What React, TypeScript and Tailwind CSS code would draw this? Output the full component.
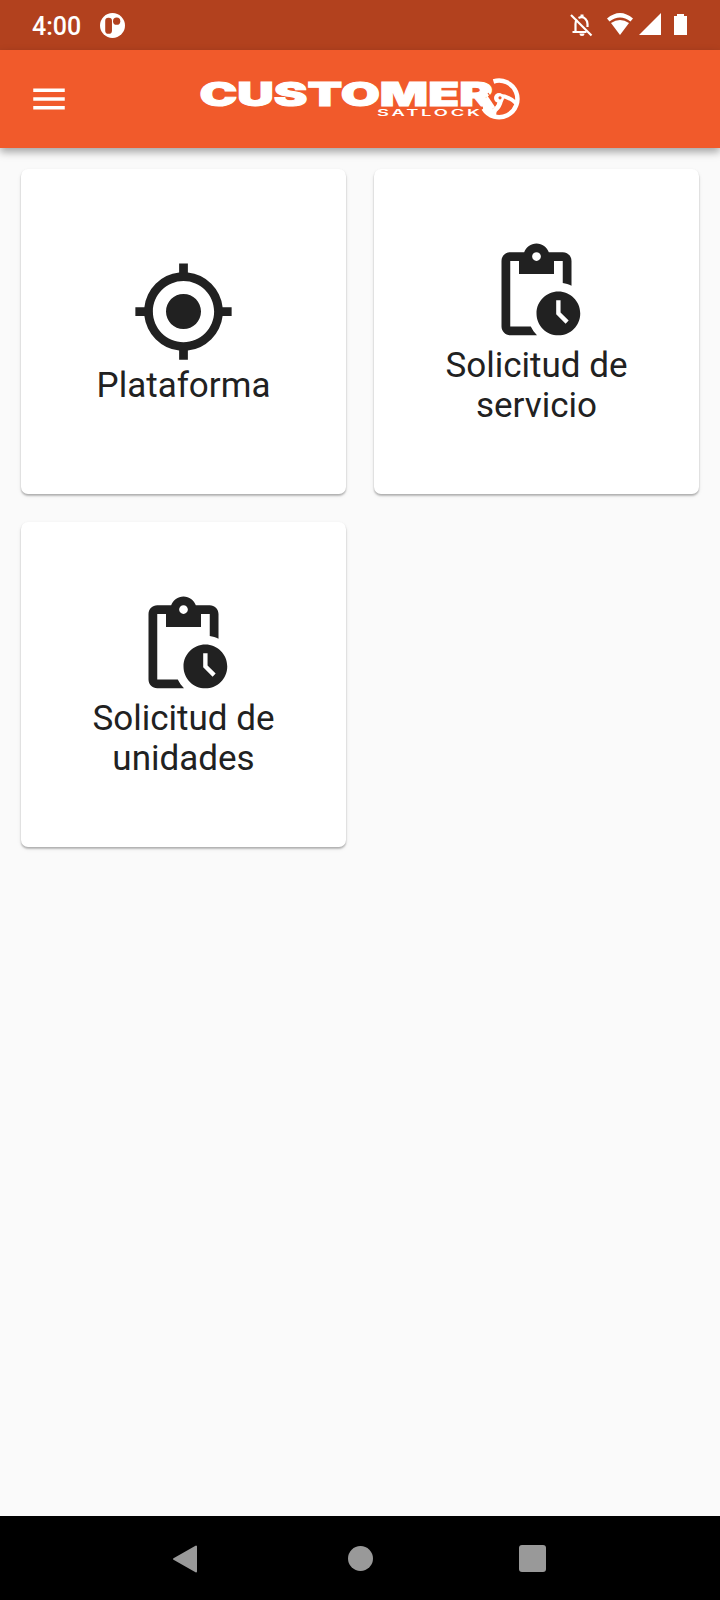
import type { ReactNode } from "react";
import { MdMenu, MdMyLocation, MdPendingActions } from "react-icons/md";

interface MenuCardProps {
  icon: ReactNode;
  lines: string[];
}

function MenuCard({ icon, lines }: MenuCardProps) {
  return (
    <button className="flex h-[325px] flex-col items-center justify-center rounded-[7px] bg-white text-[#212121] shadow-[0_2px_2px_rgba(0,0,0,0.2),0_1px_2px_rgba(0,0,0,0.1),0_2px_5px_rgba(0,0,0,0.06)]">
      {icon}
      {lines.map((line) => (
        <span key={line} className="h-10 text-[35px] leading-[44px] whitespace-nowrap">
          {line}
        </span>
      ))}
    </button>
  );
}

function StatusBar() {
  return (
    <div className="flex h-[50px] items-center bg-[#b2411e] pr-8 pl-8 text-white">
      <span className="text-[25px] leading-[50px] font-medium pt-[3px]">4:00</span>
      <svg className="ml-[19px] size-[25px]" viewBox="0 0 24 24">
        <circle cx="12" cy="12" r="12" fill="#fff" />
        <rect x="5" y="4.500" width="6.500" height="15.500" rx="3" fill="#b2411e" />
        <circle cx="16" cy="7.800" r="3.500" fill="#b2411e" />
      </svg>
      <svg className="ml-auto h-6 w-[118px]" viewBox="570 13 118 24" fill="#fff">
        <g fill="none" stroke="#fff" strokeWidth="2.200">
          <path d="M571 15l20.500 20.500" />
          <path d="M572.500 32h14M575.500 32v-8q0-3 1.500-4.500M578.500 18q4-2 7 1 2 2 2 5v3" />
        </g>
        <path d="M580.500 14.500h3v3h-3zM579.500 33.500h5q0 2.500-2.500 2.500t-2.500-2.500z" />
        <path d="M607 18.500q13-11 26 0l-2.500 3q-10.500-8-21 0z" />
        <path d="M611 23q9-6 18 0l-9 12z" />
        <path d="M661 13v22h-22z" />
        <path d="M674 16h3v-2h7v2h3v19h-13z" />
      </svg>
    </div>
  );
}

function Logo() {
  return (
    <svg className="h-[50px] w-[322px]" viewBox="199 74 322 50">
      <text
        transform="translate(199.500 105.700) scale(1.600 1)"
        textLength="183.500"
        lengthAdjust="spacingAndGlyphs"
        fontFamily="Inter, sans-serif"
        fontWeight="900"
        fontSize="32.500"
        fill="#fff"
        stroke="#fff"
        strokeWidth="1.300"
        vectorEffect="non-scaling-stroke"
      >
        CUSTOMER
      </text>
      <text
        transform="translate(377 116) scale(2 1)"
        textLength="51.500"
        fontFamily="Inter, sans-serif"
        fontWeight="600"
        fontSize="9.200"
        fill="#fff"
      >
        SATLOCK
      </text>
      {/* steering wheel */}
      <path d="M487 95l8 12-4 3-7-5z" fill="#fff" />
      <g fill="none" stroke="#fff">
        <path d="M493.500 81.500A18.300 18.300 0 1 1 483.500 108.500" strokeWidth="4.500" />
        <path d="M483 108q7-1 9 7" strokeWidth="6" />
        <path d="M500 96q9 0 17 8" strokeWidth="4" />
        <path d="M501 99q-2 8-5 10t-2 8" strokeWidth="5" />
      </g>
      <path d="M488 93l8 12" stroke="#f15a2b" strokeWidth="1.200" />
      <circle cx="499" cy="98" r="5" fill="#fff" />
      <circle cx="500" cy="97.800" r="1.600" fill="#f15a2b" />
    </svg>
  );
}

function AppBar() {
  return (
    <header className="z-10 flex h-[98px] items-center bg-[#f15a2b] pl-7 text-white shadow-[0_4px_8px_rgba(0,0,0,0.35)]">
      <MdMenu size={42} />
      <div className="ml-[129px] flex">
        <Logo />
      </div>
    </header>
  );
}

function NavigationBar() {
  return (
    <nav className="flex h-[84px] items-center bg-black pl-[172px]">
      <svg className="mt-px h-[28px] w-[25px]" viewBox="0 0 25 28">
        <path d="M2 14L24 1.500v25z" fill="#999" stroke="#999" strokeWidth="2" strokeLinejoin="round" />
      </svg>
      <div className="ml-[151px] size-[25px] rounded-full bg-[#999]" />
      <div className="ml-[146px] size-[27px] rounded-[3px] bg-[#999]" />
    </nav>
  );
}

export default function App() {
  return (
    <div className="flex h-[1600px] w-[720px] flex-col bg-[#fafafa] font-[Roboto,sans-serif]">
      <StatusBar />
      <AppBar />
      <main className="grid flex-1 grid-cols-2 content-start gap-7 p-[21px]">
        <MenuCard icon={<MdMyLocation size={105} />} lines={["Plataforma"]} />
        <MenuCard icon={<MdPendingActions size={105} />} lines={["Solicitud de", "servicio"]} />
        <MenuCard icon={<MdPendingActions size={105} />} lines={["Solicitud de", "unidades"]} />
      </main>
      <NavigationBar />
    </div>
  );
}
